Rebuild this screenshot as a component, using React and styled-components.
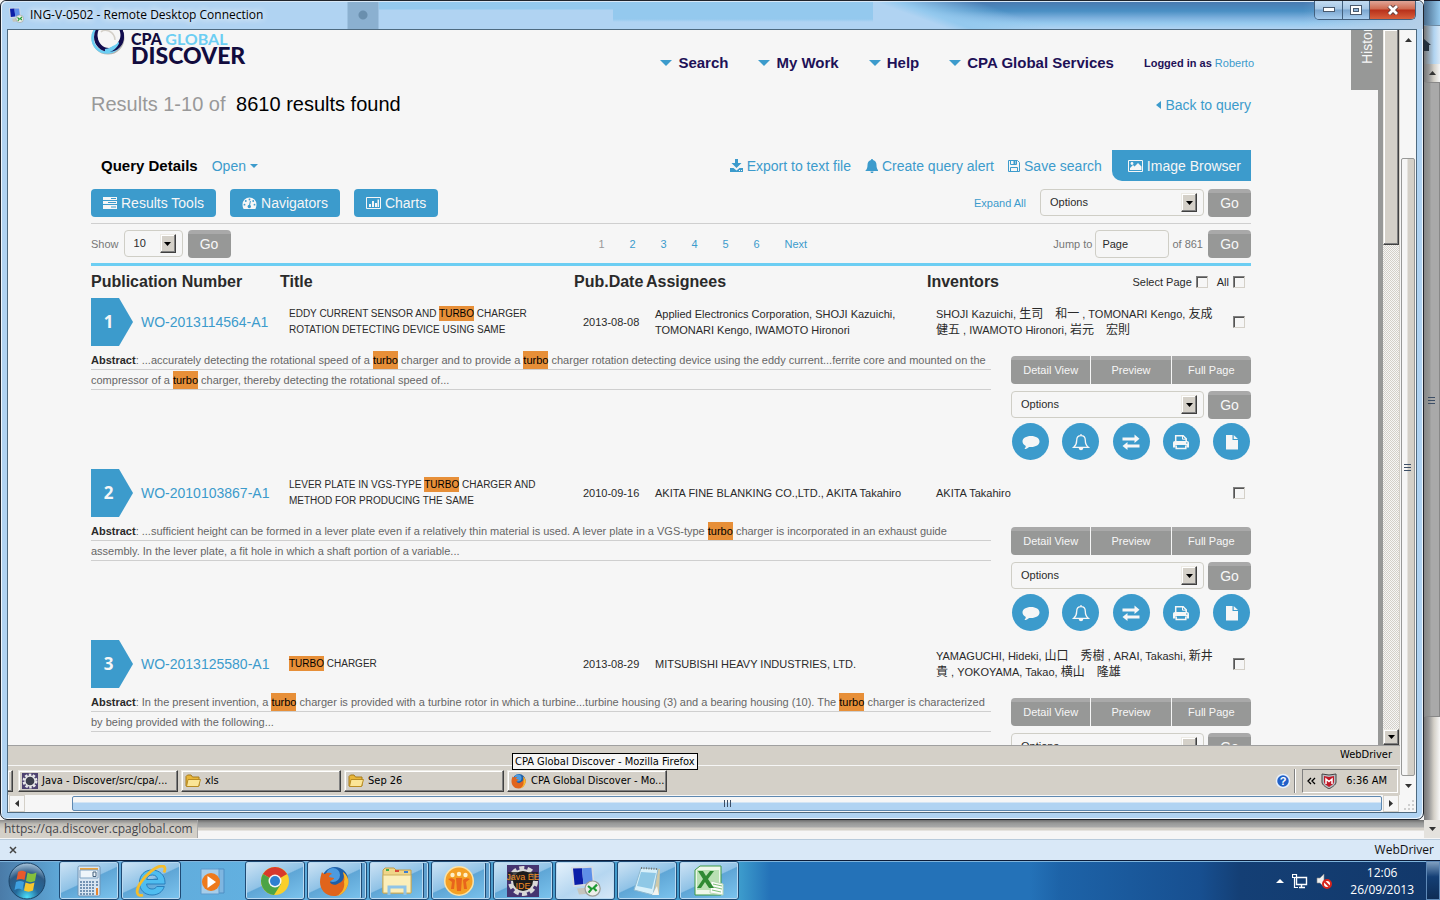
import React from "react";
import styled, { createGlobalStyle, css } from "styled-components";

const GlobalStyle = createGlobalStyle`
  *, *::before, *::after { box-sizing: border-box; }
  body { margin: 0; font-family: "Liberation Sans", Arial, sans-serif; font-size: 11px; color: #2a2a2a; }
  button, input, select { font: inherit; color: inherit; margin: 0; }
  button { border: 0; padding: 0; background: none; }
  a { color: #3c9bcc; text-decoration: none; }
  ul { margin: 0; padding: 0; list-style: none; }
  svg { flex: none; }
`;

const segoe = `"Open Sans", "Noto Sans", sans-serif`;
const tahoma = `"DejaVu Sans Condensed", "DejaVu Sans", sans-serif`;
const blue = "#3c9bcc";
const cream = "#d4d0c8";

/* ---------- desktop ---------- */

const Desktop = styled.div`
  display: flex;
  flex-direction: column;
  height: 100vh;
  min-height: 600px;
  overflow: hidden;
  background: #f6f6f6;
`;
const Upper = styled.div`
  flex: 1;
  min-height: 0;
  display: flex;
`;
const BackEdge = styled.div`
  width: 16px;
  display: flex;
  flex-direction: column;
  background: linear-gradient(90deg, #777 0, #999 5px, #d4d0c8 10px, #f6f6f6 16px);
`;
const BackTitle = styled.div`
  height: 26px;
  border-top: 1px solid #1b1b2b;
  border-bottom: 1px solid #6e8ba3;
  background: linear-gradient(90deg, #4a6c8c, #94c9ee);
`;
const BackHome = styled.div`
  height: 38px;
  padding-top: 12px;
  background: linear-gradient(90deg, #777, #b0d3f0 10px, #d8e8f7);
`;
const BackArrow = styled.div`
  height: 18px;
  display: grid;
  place-items: center;
`;
const BackThumb = styled.div`
  flex: 1;
  max-height: 635px;
  display: grid;
  place-items: center;
  border: 1px solid #888;
  background: linear-gradient(90deg, #8a8c8b, #979897 5px, #a9a9a9 6px, #a9a9a9);
`;

/* ---------- remote desktop window ---------- */

const Frame = styled.section`
  flex: 1;
  min-width: 0;
  display: flex;
  flex-direction: column;
  border: 1px solid #20242c;
  border-radius: 6px 6px 7px 7px;
  padding: 0 6px 6px;
  background: #b0d3f2;
  box-shadow: inset 1px 1px 0 #eef6fd, inset -1px -1px 0 #eef6fd;
`;
const TitleBar = styled.header`
  height: 28px;
  margin: 0 -6px;
  padding: 0 7px;
  display: flex;
  align-items: flex-start;
  border-radius: 5px 5px 0 0;
  box-shadow: inset 0 1px 0 #d8e8f7;
  background:
    radial-gradient(circle at 362px 14px, #6a8fae 0 4px, transparent 5px),
    linear-gradient(90deg, transparent 346px, #8bb0d0 347px 377px, transparent 378px),
    linear-gradient(20deg, #b0d3f2 26px, #94c9ee 34px, transparent 62px) right / 550px 100% no-repeat,
    linear-gradient(90deg, transparent 60%, #b5cfe8) right / 300px 100% no-repeat,
    linear-gradient(180deg, #4a78ae 0, #4a8fc4 10px, #7db0dd 17px, #94c9ee 22px, #b0d3f2 28px) right / 550px 100% no-repeat,
    linear-gradient(180deg, #94c9ee 0, #94c9ee 18px, #b0d3f2 21px) right 550px top / 260px 100% no-repeat,
    linear-gradient(180deg, #94c9ee 0 8px, #b0d3f2 9px) right / 1044px 100% no-repeat;
`;
const TitleText = styled.h1`
  margin: 0;
  padding: 0 4px 0 6px;
  flex: 1;
  font: 12px/28px ${segoe};
  color: #000;
  text-shadow: 0 0 6px #fff, 0 0 8px #fff;
`;
const TitleIcon = styled.span`
  padding-top: 6px;
  height: 24px;
`;
const WinButtons = styled.div`
  display: flex;
  border: 1px solid #42607e;
  border-top: 0;
  border-radius: 0 0 5px 5px;
  overflow: hidden;
`;
const WinButton = styled.button`
  width: ${(p) => (p.$close ? 46 : 27)}px;
  height: 18px;
  display: grid;
  place-items: center;
  border-left: ${(p) => (p.$first ? 0 : 1)}px solid #42607e;
  background: ${(p) => (p.$close
    ? "linear-gradient(180deg, #e0a597, #cf6a50 8px, #b8301a 9px, #d8603c)"
    : "linear-gradient(180deg, #c3dcf2, #a5c6e4 8px, #7aa5cf 9px, #a8cdee)")};
`;
const Client = styled.div`
  flex: 1;
  min-height: 0;
  display: flex;
  border: 1px solid #4e6a80;
  background: #f6f6f6;
`;
const Remote = styled.div`
  flex: 1;
  min-width: 0;
  display: flex;
  flex-direction: column;
`;
const Viewport = styled.div`
  flex: 1;
  min-height: 0;
  display: flex;
  overflow: hidden;
`;
const Band = styled.div`
  width: 5px;
  background: #979897;
`;
const ClassicScroll = styled.div`
  width: 17px;
  display: flex;
  flex-direction: column;
  border-right: 1px solid ${cream};
  background: repeating-conic-gradient(#d4d0c8 0 25%, #f6f6f6 0 50%) 0 0 / 2px 2px;
`;
const bevel = css`
  border: 1px solid;
  border-color: #eceae4 #404040 #404040 #eceae4;
  box-shadow: inset -1px -1px 0 #808080, inset 1px 1px 0 #fff;
  background: ${cream};
`;
const ClassicThumb = styled.div`
  ${bevel}
  height: 215px;
  border-top: 0;
`;
const ClassicArrow = styled.button`
  ${bevel}
  height: 16px;
  margin-top: auto;
  display: grid;
  place-items: center;
`;
const OuterScroll = styled.div`
  width: 16px;
  display: flex;
  flex-direction: column;
  background: #f6f6f6;
`;
const OuterArrow = styled.button`
  height: 19px;
  display: grid;
  place-items: center;
`;
const OuterTrack = styled.div`
  height: 109px;
`;
const OuterThumb = styled.div`
  flex: 1;
  margin: 0 1px;
  display: grid;
  place-items: center;
  border: 1px solid #979897;
  border-radius: 2px;
  background: linear-gradient(90deg, #f6f6f6 5px, #d4d0c8 6px);
`;
const HScroll = styled.div`
  height: 17px;
  display: flex;
  padding: 0 1px;
  background: #f6f6f6;
`;
const HButton = styled.button`
  width: 16px;
  display: grid;
  place-items: center;
  border: 1px solid ${cream};
`;
const HThumb = styled.div`
  flex: 1;
  margin: 1px 1px 1px 47px;
  display: grid;
  place-items: center;
  border: 1px solid #5e88b0;
  border-radius: 2px;
  background: linear-gradient(180deg, #f6f6f6 5px, #b0d3f2 6px);
`;

/* ---------- web page ---------- */

const Page = styled.main`
  position: relative;
  flex: 1;
  min-width: 0;
  padding: 0 127px 0 83px;
  background: #f6f6f6;
`;
const HistoryTab = styled.button`
  position: absolute;
  top: 0;
  right: 0;
  width: 27px;
  height: 60px;
  overflow: hidden;
  background: #979897;
  color: #f6f6f6;
  font-size: 14px;
  line-height: 22px;
  display: flex;
  align-items: flex-start;
  justify-content: flex-start;
  writing-mode: vertical-rl;
  rotate: 180deg;
  padding: 26px 5px 0 0;
  white-space: nowrap;
`;
const Masthead = styled.header`
  height: 60px;
  display: flex;
  justify-content: space-between;
`;
const Logo = styled.div`
  display: flex;
  gap: 5px;
  font-family: Lato, sans-serif;
  font-weight: 900;
  color: #120c3e;
`;
const LogoText = styled.div`
  font-size: 16px;
  line-height: 17px;
  white-space: nowrap;
  span { color: #6ccef3; font-weight: 700; }
  strong { display: block; font-size: 23px; line-height: 16px; font-weight: 900; }
`;
const Nav = styled.nav`
  display: flex;
  gap: 30px;
  padding-top: 24px;
  margin-right: -3px;
  line-height: 18px;
  white-space: nowrap;
`;
const NavItem = styled.a`
  display: flex;
  align-items: center;
  gap: 6px;
  height: 18px;
  font-size: 15px;
  font-weight: bold;
  color: #1e1157;
`;
const LoggedIn = styled.span`
  font-size: 11px;
  b { color: #1e1157; }
`;
const ResultsRow = styled.div`
  height: 60px;
  display: flex;
  align-items: flex-start;
  justify-content: space-between;
  line-height: 28px;
`;
const ResultsTitle = styled.h2`
  margin: 0;
  font-size: 20px;
  font-weight: normal;
  color: #999;
  b { margin-left: 5px; color: #000; font-weight: normal; }
`;
const BackLink = styled.a`
  font-size: 14px;
  line-height: 30px;
  display: flex;
  align-items: center;
  gap: 4px;
`;
const QueryRow = styled.div`
  height: 39px;
  display: flex;
  align-items: flex-start;
  gap: 14px;
  padding-left: 10px;
  line-height: 32px;
  font-size: 14px;
  white-space: nowrap;
`;
const QueryTitle = styled.h3`
  margin: 0 auto 0 0;
  display: flex;
  gap: 14px;
  font-size: 15px;
  color: #000;
  a { font-size: 14px; font-weight: normal; }
`;
const IconLink = styled.a`
  display: flex;
  align-items: center;
  gap: 4px;
`;
const ImageBrowser = styled.button`
  height: 31px;
  margin-left: -4px;
  padding: 0 10px 0 16px;
  display: flex;
  align-items: center;
  gap: 4px;
  background: ${blue};
  color: #f6f6f6;
  border-bottom-left-radius: 10px;
`;
const ToolRow = styled.div`
  height: 35px;
  display: flex;
  align-items: flex-start;
  gap: 14px;
  border-bottom: 1px solid #cfcfcf;
`;
const BlueButton = styled.button`
  height: 28px;
  padding: 0 12px;
  display: flex;
  align-items: center;
  gap: 4px;
  border-radius: 4px;
  background: ${blue};
  color: #f6f6f6;
  font-size: 14px;
`;
const ToolRight = styled.div`
  display: flex;
  align-items: center;
  gap: 14px;
  margin-left: auto;
`;
const grey = css`
  height: 28px;
  background: linear-gradient(180deg, #a9a9a9 4px, #979897 4px);
  color: #f6f6f6;
`;
const GoButton = styled.button`
  ${grey}
  width: 43px;
  border-radius: 4px;
  font-size: 14px;
  flex: none;
`;
const Picker = styled.div`
  display: flex;
  align-items: flex-start;
  gap: 4px;
`;
const SelectBox = styled.label`
  display: grid;
  align-items: center;
  width: ${(p) => p.$w}px;
  height: 27px;
  & > * { grid-area: 1 / 1; }
`;
const Select = styled.select`
  appearance: none;
  width: 100%;
  height: 27px;
  padding: 0 24px 2px 9px;
  border: 1px solid #cfcec6;
  border-radius: 4px;
  background: #f6f6f6;
  color: #2a2a2a;
`;
const SelectArrow = styled.span`
  ${bevel}
  justify-self: end;
  width: 16px;
  height: 19px;
  margin-right: 7px;
  display: grid;
  place-items: center;
  pointer-events: none;
`;
const PagerRow = styled.div`
  height: 42px;
  display: grid;
  grid-template-columns: 1fr auto 1fr;
  align-items: center;
  border-bottom: 3px solid #6ccef3;
  color: #777;
  white-space: nowrap;
`;
const Side = styled.div`
  display: flex;
  align-items: center;
  justify-content: ${(p) => (p.$end ? "flex-end" : "flex-start")};
  gap: ${(p) => (p.$end ? 3 : 5)}px;
`;
const Pages = styled.ul`
  display: flex;
  padding-left: 72px;
  li { width: 31px; }
  li span { color: #999; }
`;
const PageInput = styled.input`
  width: 74px;
  height: 28px;
  padding: 0 6px;
  border: 1px solid #cfcec6;
  border-radius: 4px;
  background: #f6f6f6;
  color: #2a2a2a;
`;
const Total = styled.span`
  padding-right: 2px;
`;

const Results = styled.table`
  width: 100%;
  table-layout: fixed;
  border-collapse: collapse;
  line-height: 16px;
  white-space: nowrap;
  th, td { padding: 0; text-align: left; }
  td { height: 48px; }
`;
const Col = styled.col`
  width: ${(p) => (p.$w ? `${p.$w}px` : "auto")};
`;
const Head = styled.th`
  height: 32px;
  font-size: 16px;
`;
const SelectHead = styled.div`
  display: flex;
  align-items: center;
  justify-content: space-between;
  padding-right: 6px;
  span { display: flex; gap: 9px; }
  label { font-size: 11px; font-weight: normal; display: flex; align-items: center; gap: 4px; }
`;
const Check = styled.input`
  appearance: none;
  display: block;
  width: 12px;
  height: 12px;
  border: 1px solid;
  border-color: #808080 #d4d0c8 #d4d0c8 #808080;
  box-shadow: inset 1px 1px 0 #555;
  background: #f6f6f6;
`;
const NumberCell = styled.div`
  display: flex;
  align-items: center;
  gap: 8px;
  font-size: 14px;
`;
const Badge = styled.span`
  width: 42px;
  height: 48px;
  padding-right: 7px;
  background: ${blue};
  clip-path: polygon(0 0, 28px 0, 100% 50%, 28px 100%, 0 100%);
  color: #f6f6f6;
  font: bold 17px/48px "Open Sans", sans-serif;
  text-align: center;
`;
const Cell = styled.td`
  font-size: ${(p) => (p.$caps ? 10 : 11)}px;
  div { padding-left: 9px; }
`;
const Mark = styled.mark`
  background: #e78f38;
  color: #000;
  padding: ${(p) => (p.$tall ? "3px 0" : "2px 0")};
`;
const Cjk = styled.span`
  font-family: "Noto Sans CJK JP", sans-serif;
  font-size: 12px;
  line-height: 12px;
`;
const Detail = styled.div`
  height: 123px;
  display: flex;
  gap: 20px;
  padding-top: 4px;
`;
const Abstract = styled.p`
  flex: 1;
  margin: 0;
  color: #666;
  span { display: block; height: 20px; line-height: 20px; border-bottom: 1px solid #cfcfcf; }
  b { color: #2a2a2a; }
`;
const Actions = styled.div`
  width: 240px;
  padding-top: 6px;
  display: flex;
  flex-direction: column;
`;
const ViewButtons = styled.div`
  display: flex;
  gap: 1px;
  margin-bottom: 7px;
  border-radius: 4px;
  overflow: hidden;
`;
const ViewButton = styled.button`
  ${grey}
  flex: 1;
`;
const Circles = styled.div`
  display: flex;
  justify-content: space-between;
  padding: 4px 1px 0;
`;
const Circle = styled.button`
  width: 37px;
  height: 37px;
  border-radius: 50%;
  display: grid;
  place-items: center;
  background: ${blue};
`;

/* ---------- remote task bar ---------- */

const StatusLine = styled.div`
  height: 21px;
  padding: 0 8px;
  border-top: 1px solid #a0a0a0;
  border-bottom: 1px solid #f6f6f6;
  background: ${cream};
  color: #000;
  font: 11px/18px ${tahoma};
  text-align: right;
`;
const RemoteBar = styled.div`
  height: 29px;
  display: flex;
  align-items: center;
  gap: 3px;
  padding-right: 2px;
  background: ${cream};
  color: #000;
  font: 11px/20px ${tahoma};
`;
const RemoteTask = styled.button`
  ${bevel}
  width: 160px;
  height: 22px;
  padding: 0 3px;
  display: flex;
  align-items: center;
  gap: 4px;
  white-space: nowrap;
`;
const RemoteCut = styled.span`
  ${bevel}
  width: 5px;
  height: 22px;
  margin-right: 2px;
  border-left: 0;
`;
const TaskWrap = styled.div`
  position: relative;
`;
const Tooltip = styled.div`
  position: absolute;
  left: 5px;
  bottom: 22px;
  height: 17px;
  padding: 0 2px;
  border: 1px solid #000;
  background: #f6f6f6;
  line-height: 16px;
  white-space: nowrap;
`;
const RemoteTray = styled.div`
  height: 24px;
  display: flex;
  align-items: center;
  gap: 5px;
  margin-left: 3px;
  padding: 0 10px 0 4px;
  border: 1px solid;
  border-color: #808080 #fff #fff #808080;
`;
const RemoteClock = styled.time`
  padding-left: 4px;
`;
const Divider = styled.span`
  width: 2px;
  height: 24px;
  border-left: 1px solid #808080;
  border-right: 1px solid #fff;
`;
const Help = styled.span`
  margin-left: auto;
  height: 16px;
`;

/* ---------- local chrome under the window ---------- */

const LinkStrip = styled.div`
  height: 20px;
  display: flex;
  align-items: flex-start;
  justify-content: space-between;
  border-bottom: 1px solid #b8cbdc;
  background: linear-gradient(180deg, #6d6d6d 0, #979897 3px, #a9a9a9 7px, #d4d0c8 8px 10px, #f6f6f6 11px);
`;
const LinkHint = styled.span`
  height: 18px;
  padding: 0 4px;
  border-right: 1px solid #a9a9a9;
  background: linear-gradient(180deg, #8a8a8a, #bdbbb5 4px, #d4d0c8 9px);
  color: #44464c;
  font: 12px/18px ${segoe};
`;
const StripArrow = styled.span`
  width: 16px;
  height: 18px;
  display: grid;
  place-items: center;
  background: #e4e2dd;
`;
const AddonBar = styled.div`
  height: 20px;
  display: flex;
  align-items: center;
  justify-content: space-between;
  padding: 0 6px 0 9px;
  background: #d9e8f7;
  color: #111;
  font: 12px/20px ${segoe};
`;
const Taskbar = styled.footer`
  height: 40px;
  display: flex;
  align-items: stretch;
  border-top: 1px solid #0c1c38;
  box-shadow: inset 0 1px 0 #7fb4dc;
  background: linear-gradient(90deg, #4a7ba8 0, #5fa8d8 60px, #62b0e0 250px, #4a9ccc 500px, #3c9bcc 740px, #2472b8 770px, #2472b8 1030px, #1d63a8 1060px, #174f90 1200px, #143f75 1240px, #12386a);
`;
const Start = styled.button`
  width: 54px;
  margin-right: 5px;
  display: grid;
  place-items: center;
`;
const TaskButton = styled.button`
  width: 60px;
  margin: 0 2px 0 0;
  padding-right: ${(p) => (p.$stack ? 5 : 0)}px;
  display: grid;
  place-items: center;
  ${(p) => !p.$bare && css`
    border: 1px solid #1f4a74;
    border-radius: 3px;
    box-shadow: inset 0 0 0 1px #b9daf2${p.$stack ? ", inset -4px 0 0 #5f9fce, inset -5px 0 0 #1f4a74, inset -6px 0 0 #b9daf2" : ""};
    background: ${p.$active
      ? "linear-gradient(150deg, #e6f2fc, #b5d6f0 55%, #d8e8f7)"
      : "linear-gradient(155deg, #cfe4f5 0, #8fc2e6 48%, #5fa6d6 50%, #7cc4ee)"};
  `}
`;
const Tray = styled.div`
  display: flex;
  align-items: center;
  gap: 8px;
  margin-left: auto;
  color: #fff;
  font: 12px/17px ${segoe};
  text-align: center;
`;
const Clock = styled.time`
  padding-left: 10px;
`;
const ShowDesktop = styled.button`
  align-self: stretch;
  width: 14px;
  margin-left: 4px;
  border: 1px solid #5f8ab8;
  background: linear-gradient(180deg, #7f9fc0, #143f75 40%, #0e2c55);
`;

/* ---------- drawings ---------- */

const Tri = ({ w = 7, h = 4, fill = "#000", dir = "down" }) => {
  const d = { down: `0,0 ${w},0 ${w / 2},${h}`, up: `0,${h} ${w},${h} ${w / 2},0`, left: `${w},0 ${w},${h} 0,${h / 2}`, right: `0,0 ${w},${h / 2} 0,${h}` }[dir];
  return <svg width={w} height={h} aria-hidden="true"><polygon points={d} fill={fill} /></svg>;
};

const icons = {
  download: <g fill="currentColor"><path d="M5 0h3v4h3.500L6.500 9 1.500 4H5z" /><path d="M0 9h3.500l3 2.500 3-2.500H13v4H0z" /><path d="M9 11h1v1H9zM11 11h1v1h-1z" fill="#f6f6f6" /></g>,
  bell: <path fill="currentColor" d="M7 0c.7 0 1 .5 1 1 2.300.5 3.500 2.500 3.500 5 0 3 .8 4.500 2 5.500V12H.5v-.5c1.200-1 2-2.500 2-5.500 0-2.500 1.200-4.500 3.500-5 0-.5.3-1 1-1zM5.500 12.500h3c0 1-.6 1.500-1.500 1.500s-1.500-.5-1.500-1.500z" />,
  save: <g fill="none" stroke="currentColor"><path d="M.5 1.500h9l2 2v9H.5z" /><path d="M2.500 1.500v4h6v-4M2.500 12.500v-4h7v4" /><path d="M6.500 2v3" strokeWidth="2" /></g>,
  image: <g><path d="M.5 1.500h14v11H.5z" fill="none" stroke="currentColor" /><path d="M2 11V9l3-3 1.500 1.500L10 4l3.500 3.500V11z" fill="currentColor" /><circle cx="4" cy="4.500" r="1.400" fill="currentColor" /></g>,
  tasks: <g><path d="M0 1h14v3H0zM0 5h14v3H0zM0 9h14v4H0z" fill="currentColor" /><path d="M8 2h5v1H8zM5 6h8v1H5zM8 10.500h5v1H8z" fill={blue} /></g>,
  gauge: <g><path d="M7.500 1.500a7 7 0 0 1 7 7c0 1.600-.4 3-1.100 4.500H1.600A9 9 0 0 1 .5 8.500a7 7 0 0 1 7-7z" fill="currentColor" /><g fill={blue}><circle cx="7.500" cy="3.500" r=".9" /><circle cx="3.800" cy="5" r=".9" /><circle cx="2.500" cy="8.700" r=".9" /><circle cx="12.500" cy="8.700" r=".9" /><circle cx="11.200" cy="5" r=".9" /><circle cx="7.300" cy="10.500" r="1.700" /></g><path d="M7.400 10l1-5" stroke={blue} /></g>,
  chart: <g><path d="M.5 1.500h14v11H.5z" fill="none" stroke="currentColor" /><path d="M3 8h2v3H3zM6 5h2v6H6zM9 7h2v4H9zM11.500 3.500h1.500V11h-1.500z" fill="currentColor" /></g>,
};
const Icon = ({ name, w = 14 }) => <svg width={w} height="14" viewBox={`0 0 ${w} 14`} aria-hidden="true">{icons[name]}</svg>;

const actionIcons = [
  ["Comment", <path fill="#f6f6f6" d="M10 4c5 0 8.500 2.300 8.500 5.500S15 15 10 15c-.7 0-1.300 0-1.900-.1C6.800 16 5.300 16.800 3.300 17.100c.9-1 1.300-1.900 1.500-3.200C2.700 12.900 1.500 11.300 1.500 9.500 1.500 6.300 5 4 10 4z" />],
  ["Alert", <g fill="none" stroke="#f6f6f6" strokeWidth="1.300"><path d="M10 2v1.500M2.700 15.300c2.200-1.800 3-4 3-7 0-3 1.800-4.700 4.300-4.700s4.300 1.700 4.300 4.700c0 3 .8 5.200 3 7z" /><path d="M8.300 16c.2 1.200.8 1.700 1.700 1.700s1.500-.5 1.700-1.700" fill="#f6f6f6" /></g>],
  ["Compare", <path fill="#f6f6f6" d="M1.500 5.500h12v-3l5 4.200-5 4.200V8.500h-12zM18.500 12.500h-12v-2.500l-5 4 5 4v-2.500h12z" />],
  ["Print", <g><path d="M4.700 9V3.700h7.500l3 3V9" fill="none" stroke="#f6f6f6" strokeWidth="1.500" /><path d="M11.500 3.500v3.700h4" fill="none" stroke="#f6f6f6" /><path d="M4 9h12c1.300 0 2 .8 2 2v4.500h-2.500V13h-11v2.500H2V11c0-1.200.7-2 2-2z" fill="#f6f6f6" /><path d="M5.200 13.500v3h9.600v-3" fill="none" stroke="#f6f6f6" strokeWidth="1.500" /><circle cx="15.800" cy="11" r=".7" fill={blue} /></g>],
  ["Document", <path fill="#f6f6f6" d="M4 3h6.500v5H16v9.500H4zM11.700 3L16 7H11.700z" />],
];

const LogoRing = () => (
  <svg width="35" height="26" aria-hidden="true">
    <ellipse cx="17" cy="8" rx="15.500" ry="15.500" fill="none" stroke="#b5b3ae" strokeWidth="2" />
    <circle cx="16" cy="8" r="14.500" fill="none" stroke="#6ccef3" strokeWidth="2.500" />
    <circle cx="18" cy="7" r="13" fill="none" stroke="#120c4e" strokeWidth="4" />
    <path d="M27 4a14 14 0 0 1-13 17" fill="none" stroke="#6ccef3" strokeWidth="4" />
    <path d="M29.500 0a13 13 0 0 1-1 13" fill="none" stroke="#120c4e" strokeWidth="4" />
    <circle cx="18" cy="5" r="11.500" fill="#f6f6f6" />
    <path d="M10 2c2-2 5-2 8-1 4 2 6 5 6 9" fill="none" stroke="#d4d0c8" strokeWidth="1.500" />
  </svg>
);

const RdpGlyph = ({ size = 16 }) => (
  <svg width={size} height={size} viewBox="0 0 16 16" aria-hidden="true">
    <path d="M1 1l11-.5.800 9.500L2 11z" fill="#d5dbe2" />
    <path d="M2 1.800l4.500-.2.700 7.900-4.400.5z" fill="#0c1ea8" /><path d="M6.500 1.600l4.700-.2.700 7.700-4.700.4z" fill="#5f8fe8" />
    <path d="M4 11.800l6-.5 1 3-6 .5z" fill="#c5c5bd" />
    <circle cx="11.800" cy="11.800" r="3.800" fill="#eceeea" stroke="#9a9c98" strokeWidth=".6" />
    <path d="M9.500 10.500l1.800 1.500-1.500 1.800M14 9.800l-1.700 1.700 1.500 1.500" fill="none" stroke="#1f9a32" strokeWidth="1.100" />
  </svg>
);
const Folder = () => (
  <svg width="16" height="16" aria-hidden="true">
    <path d="M1 13V3.500L2.500 2H6l1.500 2H14v9z" fill="#e8b63a" stroke="#a67a1a" />
    <path d="M3 6.500h12.500l-2 7H1.500z" fill="#fbe596" stroke="#b98c22" />
  </svg>
);
const Gear = () => (
  <svg width="16" height="16" aria-hidden="true">
    <rect width="16" height="16" fill="#4e4270" />
    <circle cx="8" cy="8" r="6.300" fill="none" stroke="#e8e8e8" strokeWidth="2.400" strokeDasharray="2.500 1.460" />
    <circle cx="8" cy="8" r="5" fill="#3d3f4c" stroke="#e8e8e8" strokeWidth="1.300" />
  </svg>
);
const Firefox = ({ size }) => (
  <svg width={size} height={size} viewBox="0 0 32 32" aria-hidden="true">
    <circle cx="16" cy="15" r="13" fill="#1d5fa8" /><circle cx="14" cy="10" r="7" fill="#4c9be0" />
    <path d="M3 7c1 1.500 2 2 3 2 3-2 6-1 7 0-2 .5-3 1.500-3 3l5 1c0 2-4 2-4 4 1 3 6 4 9 1 4-1 6-6 4-11 5 4 7 10 4 15-3 7-8 9-13 9C6 31 1 24 1 17c0-4 1-7 2-10z" fill="#e0641c" />
    <path d="M24 7c5 4 7 10 4 15-2 5-6 8-10 9 6-4 8-9 7-14 1-3 0-7-1-10z" fill="#f8b92c" />
  </svg>
);
const StartOrb = () => (
  <svg width="38" height="38" aria-hidden="true">
    <defs><radialGradient id="orb" cx=".5" cy=".95" r=".95"><stop offset="0" stopColor="#4ce0fa" /><stop offset=".35" stopColor="#256a9c" /><stop offset=".7" stopColor="#2d5a84" /><stop offset="1" stopColor="#a9c6dd" /></radialGradient></defs>
    <circle cx="19" cy="19" r="18" fill="url(#orb)" stroke="#1c4468" />
    <path d="M10 10c3-2 5-1.500 8 0l-1.500 8c-3-1.500-5-1.500-8 0z" fill="#e8592b" />
    <path d="M19.500 10.500c3 1.500 5 2 9 0L27 19c-3 1.500-6 1.500-9 0z" fill="#84c03c" />
    <path d="M8 20c3-1.500 5-1.500 8 0l-1.500 8c-3-2-5-1.500-8 0z" fill="#3fa0e0" />
    <path d="M17.500 20.500c3 1.500 6 1.500 9 0L25 28.500c-3 1.500-6 1.500-9 0z" fill="#f8c62e" />
  </svg>
);
const art = {
  Calculator: (
    <g><rect x="5" y="1" width="22" height="30" rx="1.500" fill="#d8e6f2" stroke="#6f93b5" /><path d="M7 3h18v2H7z" fill="#e9a23c" /><path d="M7 5h18v8H7z" fill="#eef5fa" stroke="#7fa3c4" /><path d="M20 7h3v4.500h-3z" fill="none" stroke="#44617d" />
      <g fill="#7393b3">{[16, 19, 22, 25, 28].map((y) => [7, 10, 13, 16, 19].map((x) => <rect key={x + "-" + y} x={x} y={y} width="2" height="2" />))}{[16, 19].map((y) => <rect key={y} x="23" y={y} width="2" height="2" />)}</g><path d="M23 23h2v7h-2z" fill="#e8842c" /></g>),
  "Internet Explorer": (
    <g><path d="M30 19H11.500c.5 3.500 2.500 5 5.500 5 2.300 0 3.800-.8 4.800-2.500h7.500C27.500 27 23 30 17 30 9.500 30 4.500 25 4.500 17.500S9.700 5 17 5s13 5 13 12.500zM11.700 14.500h11c-.5-3-2.300-4.500-5.400-4.500s-5 1.500-5.600 4.500z" fill="#4fbdf0" stroke="#2a7fbc" />
      <path d="M8 30C2 32 0 27 5 18.500 10 10 21 1 27 1c3.500 0 3.500 3 2 6.500" fill="none" stroke="#f4bd2c" strokeWidth="2.800" /></g>),
  "Media Player": (
    <g><path d="M21 4h6v24h-6z" fill="#7fb6e0" stroke="#4f8fc4" /><path d="M4 4h18v25H4z" fill="#a6cdea" stroke="#5f9bcd" /><circle cx="14" cy="17" r="9" fill="#ee7a1c" /><path d="M10.500 11l8.500 6-8.500 6z" fill="#fff" /></g>),
  Chrome: (
    <g><circle cx="16" cy="16" r="14" fill="#f8cf2c" /><path d="M16 16L3.900 9a14 14 0 0 1 24.200 0z" fill="#d8382c" /><path d="M3.900 9A14 14 0 0 0 15 30l7-11-6-3z" fill="#4ca446" /><circle cx="16" cy="16" r="6.500" fill="#f6f6f6" /><circle cx="16" cy="16" r="5" fill="#2f7fd0" /></g>),
  Explorer: (
    <g><path d="M2 28V5l2-2h9l2 2h15v23z" fill="#f0d588" stroke="#c29d48" /><path d="M5 4h3v2H5z" fill="#3fae4a" /><path d="M14 5h4v2h-4z" fill="#d84838" /><path d="M23 6h4v2h-4z" fill="#3f7fd0" /><path d="M2 10h28v18H2z" fill="#fbeeba" stroke="#cdb060" /><path d="M8 30v-8h16v8" fill="none" stroke="#8fc4e8" strokeWidth="3" /></g>),
  Team: (
    <g><circle cx="16" cy="16" r="15" fill="#fbe3a8" /><circle cx="16" cy="16" r="13.500" fill="#f4a024" /><g fill="#e8641c"><path d="M5 14c4-2 6 0 7 1l-1 9H8l1-7zM27 14c-4-2-6 0-7 1l1 9h3l-1-7z" /><path d="M13 13h6l-1 13h-4z" /></g><g fill="#fff0c8"><circle cx="9.500" cy="10" r="2.200" /><circle cx="16" cy="9" r="2.200" /><circle cx="22.500" cy="10" r="2.200" /></g></g>),
  Eclipse: (
    <g><rect width="32" height="32" fill="#453470" /><circle cx="16" cy="16" r="13" fill="none" stroke="#d8d8d8" strokeWidth="4" strokeDasharray="5 3.170" /><circle cx="16" cy="16" r="11" fill="#1c1c1c" stroke="#d8d8d8" strokeWidth="2" /><path d="M1 7h30v9H1z" fill="#1c1c1c" fillOpacity=".75" /><text x="16" y="15" textAnchor="middle" fontSize="9" fontFamily="Liberation Sans, sans-serif" fill="#f08a24">Java EE</text><text x="16" y="24" textAnchor="middle" fontSize="9" fontFamily="Liberation Sans, sans-serif" fill="#f08a24">IDE</text></g>),
  Notepad: (
    <g><path d="M11 3l18 1-1 26-6-1z" fill="#cfc9a8" /><path d="M10 3l17 1-5 26-19-5z" fill="#d8f0fa" stroke="#8fb9cf" /><path d="M10 7l15 1-4 16-15-3z" fill="#8fc8e6" /><path d="M21 30l5-9 2 9z" fill="#f4f4f0" /><path d="M10 3l17 1" stroke="#777" strokeWidth="2" strokeDasharray="1 1.500" /></g>),
  Excel: (
    <g><path d="M2 5l5-4h21v29H2z" fill="#eef8ea" stroke="#3f9a44" /><path d="M4 5h22v20H4z" fill="#b9e0b4" /><path d="M18 16l12 3v11l-13-2z" fill="#fbfdfa" stroke="#b9d8b4" /><path d="M20 19l9 2M20 22l9 2M19 25l9 2" stroke="#7fbf7a" /><path d="M5 6h5l3 5 4-5h4l-6 8 6 9h-5l-4-6-4 6H4l6-9z" fill="#2f8a34" /></g>),
};
const Art = ({ name }) => <svg width="32" height="32" viewBox="0 0 32 32" aria-hidden="true">{art[name]}</svg>;

/* ---------- data ---------- */

const T = () => <Mark $tall>turbo</Mark>;
const TT = () => <Mark>TURBO</Mark>;
const J = Cjk;

const rows = [
  {
    n: 1, id: "WO-2013114564-A1", date: "2013-08-08",
    title: <>EDDY CURRENT SENSOR AND <TT /> CHARGER<br />ROTATION DETECTING DEVICE USING SAME</>,
    assignees: <>Applied Electronics Corporation, SHOJI Kazuichi,<br />TOMONARI Kengo, IWAMOTO Hironori</>,
    inventors: <>SHOJI Kazuichi, <J>生司　和一</J> , TOMONARI Kengo, <J>友成</J><br /><J>健五</J> , IWAMOTO Hironori, <J>岩元　宏則</J></>,
    lines: [
      <>...accurately detecting the rotational speed of a <T /> charger and to provide a <T /> charger rotation detecting device using the eddy current...ferrite core and mounted on the</>,
      <>compressor of a <T /> charger, thereby detecting the rotational speed of...</>,
    ],
  },
  {
    n: 2, id: "WO-2010103867-A1", date: "2010-09-16",
    title: <>LEVER PLATE IN VGS-TYPE <TT /> CHARGER AND<br />METHOD FOR PRODUCING THE SAME</>,
    assignees: "AKITA FINE BLANKING CO.,LTD., AKITA Takahiro",
    inventors: "AKITA Takahiro",
    lines: [
      <>...sufficient height can be formed in a lever plate even if a relatively thin material is used. A lever plate in a VGS-type <T /> charger is incorporated in an exhaust guide</>,
      <>assembly. In the lever plate, a fit hole in which a shaft portion of a variable...</>,
    ],
  },
  {
    n: 3, id: "WO-2013125580-A1", date: "2013-08-29",
    title: <><TT /> CHARGER</>,
    assignees: "MITSUBISHI HEAVY INDUSTRIES, LTD.",
    inventors: <>YAMAGUCHI, Hideki, <J>山口　秀樹</J> , ARAI, Takashi, <J>新井</J><br /><J>貴</J> , YOKOYAMA, Takao, <J>横山　隆雄</J></>,
    lines: [
      <>In the present invention, a <T /> charger is provided with a turbine rotor in which a turbine...turbine housing (3) and a bearing housing (10). The <T /> charger is characterized</>,
      <>by being provided with the following...</>,
    ],
  },
];

const OptionSelect = ({ w, label, value = "Options" }) => (
  <SelectBox $w={w}>
    <Select aria-label={label} defaultValue={value}><option>{value}</option></Select>
    <SelectArrow><Tri /></SelectArrow>
  </SelectBox>
);

function ResultRow({ row }) {
  return (
    <>
      <tr>
        <td><NumberCell><Badge>{row.n}</Badge><a href="#doc">{row.id}</a></NumberCell></td>
        <Cell $caps><div>{row.title}</div></Cell>
        <Cell><div>{row.date}</div></Cell>
        <Cell><div>{row.assignees}</div></Cell>
        <Cell><div>{row.inventors}</div></Cell>
        <td><Check type="checkbox" aria-label={`Select ${row.id}`} /></td>
      </tr>
      <tr>
        <td colSpan="6">
          <Detail>
            <Abstract>
              <span><b>Abstract</b>: {row.lines[0]}</span>
              <span>{row.lines[1]}</span>
            </Abstract>
            <Actions>
              <ViewButtons>
                <ViewButton>Detail View</ViewButton>
                <ViewButton>Preview</ViewButton>
                <ViewButton>Full Page</ViewButton>
              </ViewButtons>
              <Picker><OptionSelect w={193} label={`Options for ${row.id}`} /><GoButton>Go</GoButton></Picker>
              <Circles>{actionIcons.map(([label, g]) => <Circle key={label} aria-label={label}><svg width="20" height="20" aria-hidden="true">{g}</svg></Circle>)}</Circles>
            </Actions>
          </Detail>
        </td>
      </tr>
    </>
  );
}

function WebPage() {
  return (
    <Page>
      <Masthead>
        <Logo><LogoRing /><LogoText>CPA <span>GLOBAL</span><strong>DISCOVER</strong></LogoText></Logo>
        <Nav>
          {["Search", "My Work", "Help", "CPA Global Services"].map((t) => (
            <NavItem key={t} href="#nav"><Tri w={12} h={6} fill={blue} />{t}</NavItem>
          ))}
          <LoggedIn><b>Logged in as</b> <a href="#user">Roberto</a></LoggedIn>
        </Nav>
      </Masthead>
      <ResultsRow>
        <ResultsTitle>Results 1-10 of <b>8610 results found</b></ResultsTitle>
        <BackLink href="#query"><Tri w={5} h={8} dir="left" fill={blue} />Back to query</BackLink>
      </ResultsRow>
      <QueryRow>
        <QueryTitle>Query Details <IconLink href="#open">Open <Tri w={8} h={4} fill={blue} /></IconLink></QueryTitle>
        <IconLink href="#export"><Icon name="download" w={13} />Export to text file</IconLink>
        <IconLink href="#alert"><Icon name="bell" w={13} />Create query alert</IconLink>
        <IconLink href="#save"><Icon name="save" w={12} />Save search</IconLink>
        <ImageBrowser><Icon name="image" w={15} />Image Browser</ImageBrowser>
      </QueryRow>
      <ToolRow>
        <BlueButton><Icon name="tasks" />Results Tools</BlueButton>
        <BlueButton><Icon name="gauge" w={15} />Navigators</BlueButton>
        <BlueButton><Icon name="chart" w={15} />Charts</BlueButton>
        <ToolRight>
          <a href="#expand">Expand All</a>
          <Picker><OptionSelect w={164} label="Options" /><GoButton>Go</GoButton></Picker>
        </ToolRight>
      </ToolRow>
      <PagerRow>
        <Side>
          <span>Show</span>
          <OptionSelect w={59} label="Show" value="10" />
          <GoButton>Go</GoButton>
        </Side>
        <Pages>
          <li><span>1</span></li>
          {["2", "3", "4", "5", "6", "Next"].map((t) => <li key={t}><a href="#page">{t}</a></li>)}
        </Pages>
        <Side $end>
          <label htmlFor="jump">Jump to</label>
          <PageInput id="jump" defaultValue="Page" />
          <Total>of 861</Total>
          <GoButton>Go</GoButton>
        </Side>
      </PagerRow>
      <Results>
        <colgroup>
          <Col $w={189} /><Col /><Col $w={72} /><Col $w={281} /><Col $w={306} /><Col $w={18} />
        </colgroup>
        <thead>
          <tr>
            <Head>Publication Number</Head><Head>Title</Head><Head>Pub.Date</Head><Head>Assignees</Head>
            <Head colSpan="2">
              <SelectHead>Inventors<span><label>Select Page<Check type="checkbox" /></label><label>All<Check type="checkbox" /></label></span></SelectHead>
            </Head>
          </tr>
        </thead>
        <tbody>{rows.map((r) => <ResultRow key={r.n} row={r} />)}</tbody>
      </Results>
      <HistoryTab>History</HistoryTab>
    </Page>
  );
}

const Grip = ({ vertical }) => (
  <svg width="8" height="8" aria-hidden="true">
    <path d={vertical ? "M0 1.500h7M0 4.500h7M0 7.500h7" : "M1.500 0v7M4.500 0v7M7.500 0v7"} stroke="#3d4f66" />
  </svg>
);

function RemoteTaskbar() {
  return (
    <RemoteBar>
      <RemoteCut />
      <RemoteTask><Gear />Java - Discover/src/cpa/...</RemoteTask>
      <RemoteTask><Folder />xls</RemoteTask>
      <RemoteTask><Folder />Sep 26</RemoteTask>
      <TaskWrap>
        <RemoteTask><Firefox size={16} />CPA Global Discover - Mo...</RemoteTask>
        <Tooltip role="tooltip">CPA Global Discover - Mozilla Firefox</Tooltip>
      </TaskWrap>
      <Help>
        <svg width="16" height="16" aria-label="Help"><circle cx="8" cy="8" r="6.500" fill="#2060c8" stroke="#e8f0fb" strokeWidth="1.500" /><text x="8" y="12" textAnchor="middle" fontSize="11" fontWeight="bold" fontFamily="Liberation Sans, sans-serif" fill="#fff">?</text></svg>
      </Help>
      <Divider />
      <RemoteTray>
        <svg width="9" height="8" aria-hidden="true"><path d="M4 1L1 4l3 3M8 1L5 4l3 3" fill="none" stroke="#000" strokeWidth="1.300" /></svg>
        <svg width="16" height="16" aria-hidden="true"><path d="M1 1l7 1 7-1v8c0 3-4 5-7 7-3-2-7-4-7-7z" fill="#b8bcc2" stroke="#444" /><path d="M3 3l5 1 5-1v6c0 2-3 3.500-5 5-2-1.500-5-3-5-5z" fill="#c01a28" /><path d="M5 11V6l3 2.500L11 6v5" fill="none" stroke="#fff" strokeWidth="1.500" /></svg>
        <RemoteClock>6:36 AM</RemoteClock>
      </RemoteTray>
    </RemoteBar>
  );
}

export default function App() {
  return (
    <Desktop>
      <GlobalStyle />
      <Upper>
        <Frame>
          <TitleBar>
            <TitleIcon><RdpGlyph /></TitleIcon>
            <TitleText>ING-V-0502 - Remote Desktop Connection</TitleText>
            <WinButtons>
              <WinButton $first aria-label="Minimize"><svg width="12" height="6"><rect x=".5" y=".5" width="11" height="4" fill="#fff" stroke="#4a5a6e" /></svg></WinButton>
              <WinButton aria-label="Maximize"><svg width="12" height="10"><rect x=".5" y=".5" width="11" height="9" fill="#fff" stroke="#4a5a6e" /><rect x="3.500" y="3.500" width="5" height="3" fill="#8fb5da" stroke="#4a5a6e" /></svg></WinButton>
              <WinButton $close aria-label="Close"><svg width="12" height="10"><path d="M2 1l8 8M10 1l-8 8" stroke="#5a3a3a" strokeWidth="4.500" /><path d="M2 1l8 8M10 1l-8 8" stroke="#fff" strokeWidth="2.800" /></svg></WinButton>
            </WinButtons>
          </TitleBar>
          <Client>
            <Remote>
              <Viewport>
                <WebPage />
                <Band />
                <ClassicScroll><ClassicThumb /><ClassicArrow aria-label="Scroll down"><Tri /></ClassicArrow></ClassicScroll>
              </Viewport>
              <StatusLine>WebDriver</StatusLine>
              <RemoteTaskbar />
              <HScroll>
                <HButton aria-label="Scroll left"><Tri w={4} h={7} dir="left" fill="#333" /></HButton>
                <HThumb><Grip /></HThumb>
                <HButton aria-label="Scroll right"><Tri w={4} h={7} dir="right" fill="#333" /></HButton>
              </HScroll>
            </Remote>
            <OuterScroll>
              <OuterArrow aria-label="Scroll up"><Tri w={7} h={4} dir="up" fill="#333" /></OuterArrow>
              <OuterTrack />
              <OuterThumb><Grip vertical /></OuterThumb>
              <OuterArrow aria-label="Scroll down"><Tri w={7} h={4} fill="#333" /></OuterArrow>
              <svg width="16" height="17" aria-hidden="true"><path d="M12 5h2v2h-2zM8 9h2v2H8zM12 9h2v2h-2zM4 13h2v2H4zM8 13h2v2H8zM12 13h2v2h-2z" fill="#cfcfcf" /></svg>
            </OuterScroll>
          </Client>
        </Frame>
        <BackEdge>
          <BackTitle />
          <BackHome><svg width="10" height="14" aria-hidden="true"><path d="M0 1l7 6H5v6H0z" fill="#26323e" /></svg></BackHome>
          <BackArrow><Tri w={7} h={4} dir="up" fill="#333" /></BackArrow>
          <BackThumb><Grip vertical /></BackThumb>
        </BackEdge>
      </Upper>
      <LinkStrip>
        <LinkHint>https://qa.discover.cpaglobal.com</LinkHint>
        <StripArrow><Tri w={7} h={4} fill="#333" /></StripArrow>
      </LinkStrip>
      <AddonBar>
        <button aria-label="Close bar"><svg width="8" height="8"><path d="M1 1l6 6M7 1L1 7" stroke="#444" strokeWidth="1.500" /></svg></button>
        <span>WebDriver</span>
      </AddonBar>
      <Taskbar>
        <Start aria-label="Start"><StartOrb /></Start>
        <TaskButton aria-label="Calculator"><Art name="Calculator" /></TaskButton>
        <TaskButton aria-label="Internet Explorer"><Art name="Internet Explorer" /></TaskButton>
        <TaskButton $bare aria-label="Media Player"><Art name="Media Player" /></TaskButton>
        <TaskButton aria-label="Chrome"><Art name="Chrome" /></TaskButton>
        <TaskButton $stack aria-label="Firefox"><Firefox size={32} /></TaskButton>
        <TaskButton $stack aria-label="Explorer"><Art name="Explorer" /></TaskButton>
        <TaskButton $stack aria-label="Team"><Art name="Team" /></TaskButton>
        <TaskButton aria-label="Eclipse"><Art name="Eclipse" /></TaskButton>
        <TaskButton $active aria-label="Remote Desktop"><RdpGlyph size={32} /></TaskButton>
        <TaskButton aria-label="Notepad"><Art name="Notepad" /></TaskButton>
        <TaskButton aria-label="Excel"><Art name="Excel" /></TaskButton>
        <Tray>
          <Tri w={8} h={4} dir="up" fill="#fff" />
          <svg width="16" height="16" aria-hidden="true"><path d="M4.500 4.500h10v7h-10zM7 14.500h6M9.500 12v2" fill="none" stroke="#fff" strokeWidth="1.400" /><path d="M.5 1.500h4v3h-4zM2.500 5v9.500H6" fill="none" stroke="#fff" strokeWidth="1.200" /></svg>
          <svg width="16" height="16" aria-hidden="true"><path d="M1 5h3l4-4v13l-4-4H1z" fill="#f0f0f0" stroke="#888" strokeWidth=".6" /><circle cx="11" cy="11" r="4" fill="#fff" stroke="#d8241c" strokeWidth="2" /><path d="M8.500 8.500l5 5" stroke="#d8241c" strokeWidth="2" /></svg>
          <Clock>12:06<br />26/09/2013</Clock>
          <ShowDesktop aria-label="Show desktop" />
        </Tray>
      </Taskbar>
    </Desktop>
  );
}
